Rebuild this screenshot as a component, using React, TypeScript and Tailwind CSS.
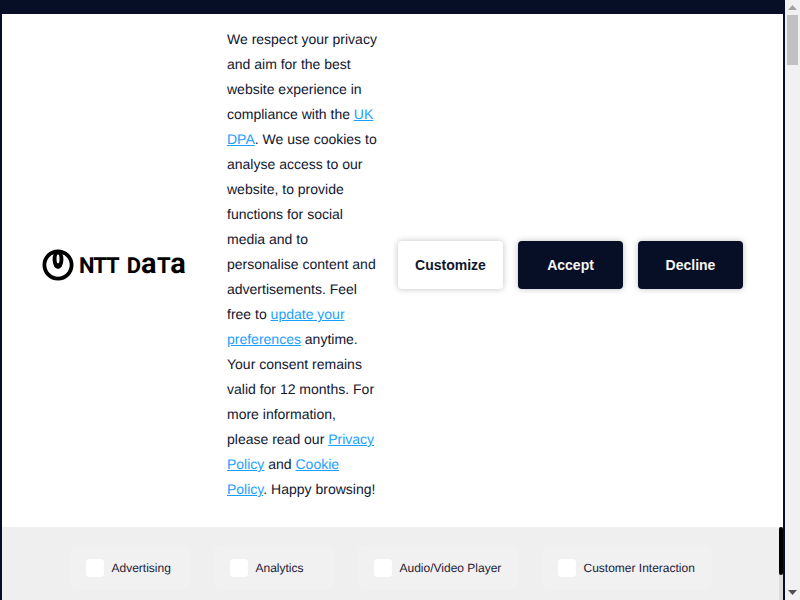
function Logo() {
  const a = <span className="font-['Roboto',sans-serif] text-[29px] font-bold tracking-[0.5px]">a</span>;
  return (
    <div className="ml-[40px] flex w-[145px] shrink-0 items-center gap-[5px]">
      <svg width="32" height="32" viewBox="0 0 32 32" className="shrink-0">
        <circle cx="16" cy="16" r="13.6" fill="none" stroke="#000" strokeWidth="3.8" />
        <ellipse cx="16" cy="10.5" rx="5.4" ry="9.5" fill="#000" />
        <ellipse cx="16" cy="10" rx="1.5" ry="4.4" fill="#fff" />
      </svg>
      <span className="flex items-baseline whitespace-nowrap font-['Roboto',sans-serif] text-[22px] leading-none font-bold text-black">
        <span className="mr-[8px] tracking-[-1px]">NTT</span>
        <span>D</span>
        {a}
        <span className="tracking-[-0.5px]">T</span>
        {a}
      </span>
    </div>
  );
}

function PageScrollbar() {
  return (
    <div className="flex h-[600px] w-[15px] shrink-0 flex-col items-center bg-[#f1f1f1]">
      <div className="flex h-[15px] w-full items-center justify-center">
        <svg width="9" height="5" viewBox="0 0 9 5"><path d="M4.5 0 L9 5 L0 5 Z" fill="#a3a3a3" /></svg>
      </div>
      <div className="h-[50px] w-[11px] bg-[#c1c1c1]" />
      <div className="flex-1" />
      <div className="flex h-[15px] w-full items-center justify-center">
        <svg width="9" height="5" viewBox="0 0 9 5"><path d="M0 0 L9 0 L4.5 5 Z" fill="#505050" /></svg>
      </div>
    </div>
  );
}

export default function App() {
  const items = [
    { label: "Advertising", w: "w-[120px]" },
    { label: "Analytics", w: "w-[120px]" },
    { label: "Audio/Video Player", w: "w-[160px]" },
    { label: "Customer Interaction", w: "w-[170px]" },
  ];
  const link = "text-[#1a9fff] underline";
  const btn = "h-[48px] w-[105px] rounded-[4px] pt-[1px] text-[14px] font-bold shadow-[0_0_6px_rgba(0,0,0,0.25)]";
  return (
    <div className="flex h-[600px] overflow-hidden font-['Liberation_Sans',Arial,sans-serif] [text-rendering:geometricPrecision]">
      <div className="h-[600px] w-[785px] shrink-0 overflow-hidden bg-[#070f26] pt-[14px] pl-[2px]">
        <div className="relative w-[781px] overflow-hidden">
          <div className="box-border flex h-[513px] items-center bg-white pb-[12px]">
            <Logo />
            <p className="ml-[40px] w-[151px] shrink-0 text-[14px] leading-[25px] text-[#10162f]">
              We respect your privacy and aim for the best website experience in compliance with the{" "}
              <a className={link}>UK DPA</a>. We use cookies to analyse access to our website, to provide functions for social media and to personalise content and advertisements. Feel free to{" "}
              <a className={link}>update your preferences</a> anytime. Your consent remains valid for 12 months. For more information, please read our{" "}
              <a className={link}>Privacy Policy</a> and{" "}
              <a className={link}>Cookie Policy</a>. Happy browsing!
            </p>
            <div className="ml-[20px] flex gap-[15px]">
              <button className={`${btn} bg-white text-[#10162f]`}>Customize</button>
              <button className={`${btn} bg-[#070f26] text-[#f5f5f5]`}>Accept</button>
              <button className={`${btn} bg-[#070f26] text-[#f5f5f5]`}>Decline</button>
            </div>
          </div>
          <div className="flex h-[120px] justify-center gap-[24px] bg-[#efefef] pt-[18px] pr-[4px]">
            {items.map((it) => (
              <div key={it.label} className={`flex h-[45px] items-center gap-[8px] rounded-[8px] bg-[#f1f1f1] px-[16px] ${it.w}`}>
                <span className="h-[18px] w-[18px] rounded-[4px] bg-white" />
                <span className="whitespace-nowrap text-[12px] text-[#1e2036]">{it.label}</span>
              </div>
            ))}
          </div>
          <div className="absolute top-[513px] right-0 h-[120px] w-[4px] bg-[#dddddd]">
            <div className="h-[48px] rounded-[2px] bg-black" />
          </div>
        </div>
      </div>
      <PageScrollbar />
    </div>
  );
}
